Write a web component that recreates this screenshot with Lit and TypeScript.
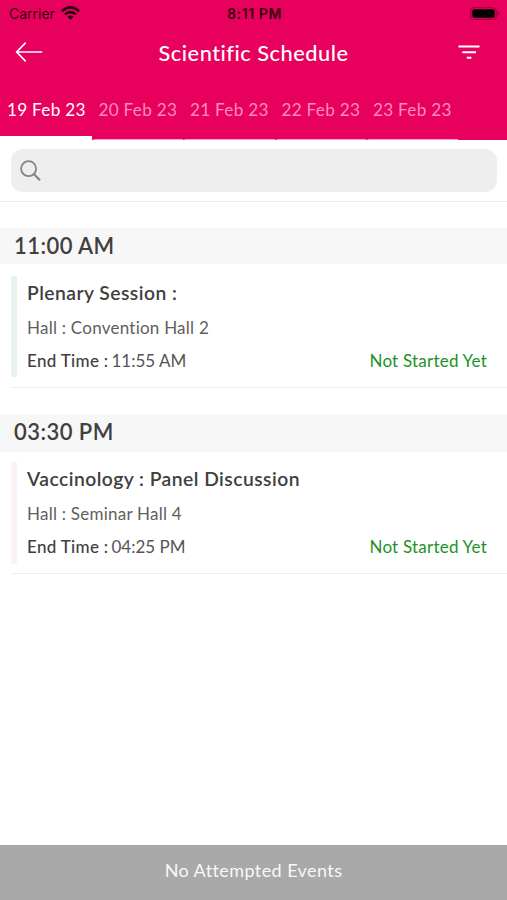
import { LitElement, html, css } from "lit";
import { customElement } from "lit/decorators.js";

interface Session {
  start: string;
  name: string;
  hall: string;
  end: string;
  tone: string;
}

const DAYS = ["19 Feb 23", "20 Feb 23", "21 Feb 23", "22 Feb 23", "23 Feb 23"];

const SESSIONS: Session[] = [
  { start: "11:00 AM", name: "Plenary Session :", hall: "Convention Hall 2", end: "11:55 AM", tone: "green" },
  { start: "03:30 PM", name: "Vaccinology : Panel Discussion", hall: "Seminar Hall 4", end: "04:25 PM", tone: "rose" },
];

@customElement("app-root")
export class AppRoot extends LitElement {
  static styles = css`
    :host {
      display: flex;
      flex-direction: column;
      height: 900px;
      overflow: hidden;
      background: #fff;
      font-family: Lato, sans-serif;
      color: #404040;
      white-space: nowrap;
    }
    svg { display: block; }
    .head { background: #e8005d; height: 140px; flex: none; }
    .status {
      height: 28px;
      box-sizing: border-box;
      display: grid;
      grid-template-columns: 1fr auto 1fr;
      align-items: center;
      padding: 0 7px 2px 9px;
      font: 14px Inter, sans-serif;
      color: #38000f;
    }
    .carrier { display: flex; align-items: center; gap: 6px; }
    .clock { font-weight: 600; letter-spacing: 0.6px; }
    .battery { justify-self: end; }
    .nav {
      height: 48px;
      display: grid;
      grid-template-columns: 60px 1fr 60px;
      align-items: center;
      color: #fff;
    }
    .back { padding-left: 15px; }
    .filter { padding-left: 11px; }
    .title { text-align: center; font-size: 21.8px; font-weight: 500; letter-spacing: 0.5px; }
    .tabs { height: 64px; display: flex; }
    .tab {
      width: 91.5px;
      box-sizing: border-box;
      padding-left: 7px;
      line-height: 67px;
      font-size: 17.2px;
      letter-spacing: 0.26px;
      color: #ff8cba;
      border-bottom: 1px solid #f8b3cf;
    }
    .tab + .tab { border-left: 3px solid transparent; padding-left: 4px; border-bottom-color: #f6a5c6; }
    .tab.on { color: #fff; border-bottom: 4px solid #fff; }
    .search {
      flex: none;
      height: 62px;
      box-sizing: border-box;
      padding: 9px 10px 0 11px;
      border-bottom: 1px solid #ececec;
    }
    .box { height: 43px; border-radius: 12px; background: #eee; padding: 11px 9px; box-sizing: border-box; }
    .band {
      margin-top: 26px;
      height: 36px;
      line-height: 35px;
      background: #f7f7f7;
      padding-left: 14px;
      font-size: 22px;
      font-weight: 600;
      letter-spacing: 0.45px;
    }
    .item {
      margin-left: 11px;
      height: 124px;
      box-sizing: border-box;
      padding-top: 12px;
      display: flex;
      border-bottom: 1px solid #efefef;
    }
    .band.rose { height: 38px; line-height: 36px; background: #f7f7f7; }
    .item.rose { height: 122px; padding-top: 10px; background: none; }
    .mark { width: 6px; height: 101px; }
    .green .mark { background: #e8f2ec; }
    .rose .mark { background: #f9f3f7; height: 102px; }
    .body { flex: 1; padding: 0 20px 0 10px; font-size: 17px; }
    .name { font-size: 19.3px; font-weight: 600; line-height: 34px; letter-spacing: 0.46px; }
    .hall { line-height: 35px; letter-spacing: 0.24px; color: #606060; }
    .row { display: flex; line-height: 32px; color: #555; }
    .label { font-weight: 500; letter-spacing: 0.32px; color: #404040; padding-right: 3px; }
    .state { margin-left: auto; color: #1c931f; letter-spacing: 0.22px; }
    .foot {
      margin-top: auto;
      height: 55px;
      box-sizing: border-box;
      border-top: 1px solid #9fa3a1;
      background: #a9a9a9;
      color: #f8f8f8;
      text-align: center;
      font-size: 18px;
      line-height: 48px;
      letter-spacing: 0.42px;
    }
  `;

  render() {
    return html`
      <div class="head">
        <div class="status">
          <div class="carrier">
            Carrier
            <svg width="19" height="14" viewBox="0 0 19 14" fill="none" stroke="#26000d" stroke-width="2.5">
              <path d="M1 5.2Q9.5-2.4 18 5.2M4 8.4Q9.5 3.8 15 8.4" />
              <path d="M9.5 13.8L6.5 10.8Q9.5 8.4 12.5 10.8Z" fill="#26000d" stroke="none" />
            </svg>
          </div>
          <div class="clock">8:11 PM</div>
          <svg class="battery" width="30" height="13" viewBox="0 0 30 13">
            <rect x="0.7" y="0.7" width="25.6" height="11.6" rx="3.4" fill="none" stroke="#96003c" stroke-width="1.1" />
            <rect x="2.3" y="2.2" width="22.4" height="8.6" rx="2" fill="#000" />
            <path d="M27.6 4.3Q29.4 5 29.4 6.5T27.6 8.7Z" fill="#96003c" />
          </svg>
        </div>
        <div class="nav">
          <svg class="back" width="28" height="20" viewBox="0 0 28 20" fill="none" stroke="#fff" stroke-width="1.7" stroke-linecap="round" stroke-linejoin="round">
            <path d="M26.5 10H1.6M10.2 1.2L1.6 10L10.2 18.8" />
          </svg>
          <div class="title">Scientific Schedule</div>
          <svg class="filter" width="22" height="16" viewBox="0 0 22 16" fill="none" stroke="#fff" stroke-width="2.1">
            <path d="M.5 2.5H21.5M4.3 8.2H18M8.8 13.8H13.4" />
          </svg>
        </div>
        <div class="tabs">
          ${DAYS.map((d, i) => html`<div class="tab ${i ? "" : "on"}">${d}</div>`)}
        </div>
      </div>
      <div class="search">
        <div class="box">
          <svg width="21" height="21" viewBox="0 0 21 21" fill="none" stroke="#858585" stroke-width="1.8">
            <circle cx="8.6" cy="8.7" r="7.5" />
            <path d="M13.8 14L20 20.2" stroke-width="2.3" />
          </svg>
        </div>
      </div>
      ${SESSIONS.map(
        (s) => html`
          <div class="band ${s.tone}">${s.start}</div>
          <div class="item ${s.tone}">
            <div class="mark"></div>
            <div class="body">
              <div class="name">${s.name}</div>
              <div class="hall">Hall : ${s.hall}</div>
              <div class="row">
                <span class="label">End Time :</span><span>${s.end}</span>
                <span class="state">Not Started Yet</span>
              </div>
            </div>
          </div>
        `
      )}
      <div class="foot">No Attempted Events</div>
    `;
  }
}
